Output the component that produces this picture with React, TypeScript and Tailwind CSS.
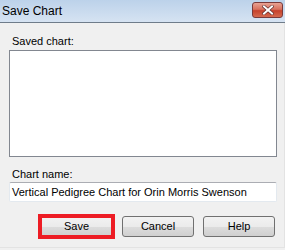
import React from 'react';

const font = { fontFamily: '"Liberation Sans", Arial, sans-serif' };

function WinButton({ label }: { label: string }) {
  return (
    <button className="block h-[21px] w-[73px] rounded-[3px] border border-[#707070] bg-[linear-gradient(#f2f2f2_0%,#ebebeb_50%,#dddddd_50%,#cfcfcf_100%)] text-[11px] leading-none text-black">
      {label}
    </button>
  );
}

export default function App() {
  return (
    <div className="w-[285px] h-[250px] bg-[#f0f0f0] overflow-hidden" style={font}>
      {/* title bar */}
      <div className="h-[22px] flex items-center justify-between bg-[linear-gradient(#bcd2ea,#d6e3f2)] pl-[2px] pr-[2px]">
        <span className="text-[12px] text-black">Save Chart</span>
        <div className="w-[31px] h-[16px] mb-[3px] rounded-[3px] border border-[#7a3a3a] bg-[linear-gradient(#e8a293_0%,#d8715e_45%,#c6422c_55%,#d56a4f_100%)] flex items-center justify-center">
          <svg width="12" height="10" viewBox="0 0 12 10">
            <path d="M2 1.5 L10 8.5 M10 1.5 L2 8.5" stroke="#5a2a2a" strokeWidth="3.2" strokeLinecap="square" />
            <path d="M2 1.5 L10 8.5 M10 1.5 L2 8.5" stroke="#ffffff" strokeWidth="2" strokeLinecap="square" />
          </svg>
        </div>
      </div>
      <div className="h-[1px] bg-[#6f7c8a]" />
      <div className="h-[225px] border-r border-b border-[#e3e3e3] px-[9px] pt-[11px] flex flex-col">
        <label className="pl-[3px] text-[11px] leading-[14px] text-black">Saved chart:</label>
        <div className="mt-[2px] h-[107px] w-[268px] bg-white border border-[#828790]" />
        <label className="mt-[10px] pl-[3px] text-[11px] leading-[14px] text-black">Chart name:</label>
        <div className="mt-[1px] h-[20px] w-[268px] bg-white border border-[#e3e9ef] border-t-[#abadb3] rounded-[2px] flex items-center pl-[2px] text-[11px] text-black whitespace-nowrap overflow-hidden">
          Vertical Pedigree Chart for Orin Morris Swenson
        </div>
        <div className="mt-[14px] flex items-start pl-[31px] gap-[9px]">
          <div className="relative flex">
            <WinButton label="Save" />
            <div className="absolute left-[-2px] right-[-2px] top-[-2px] bottom-[-2px] border-[4px] border-[#ed1c24] pointer-events-none" />
          </div>
          <WinButton label="Cancel" />
          <WinButton label="Help" />
        </div>
      </div>
    </div>
  );
}
